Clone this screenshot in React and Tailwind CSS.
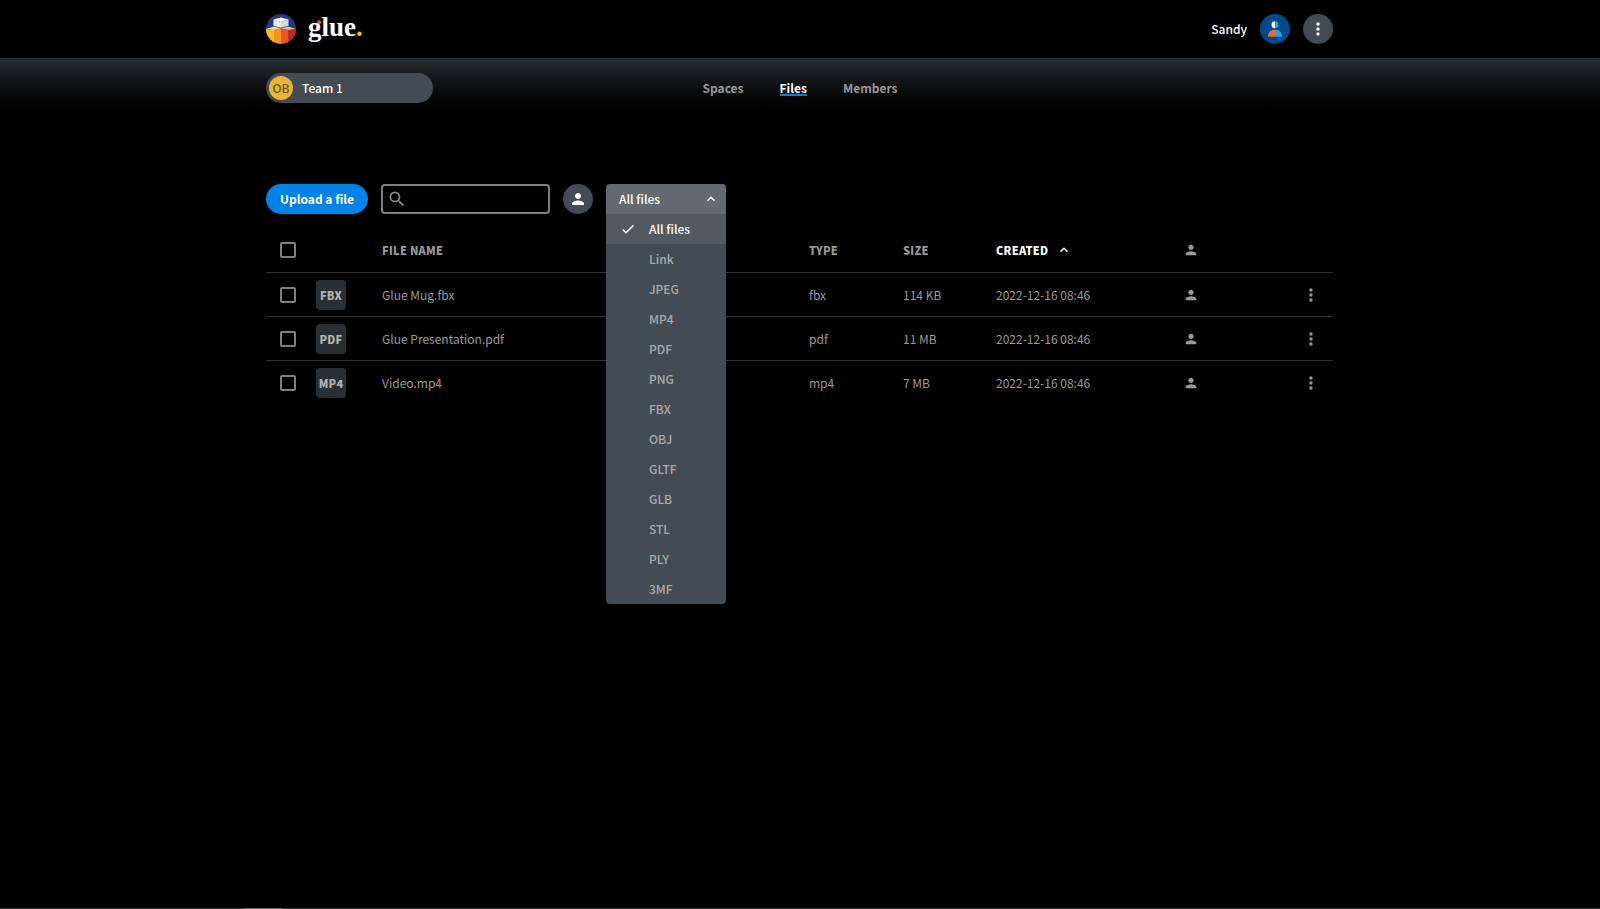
import { useState } from 'react';
import { MdCheck, MdExpandLess, MdMoreVert, MdPerson, MdSearch } from 'react-icons/md';

const fileTypes = [
  'All files',
  'Link',
  'JPEG',
  'MP4',
  'PDF',
  'PNG',
  'FBX',
  'OBJ',
  'GLTF',
  'GLB',
  'STL',
  'PLY',
  '3MF',
];

const files = [
  { name: 'Glue Mug.fbx', type: 'fbx', size: '114 KB', created: '2022-12-16 08:46' },
  { name: 'Glue Presentation.pdf', type: 'pdf', size: '11 MB', created: '2022-12-16 08:46' },
  { name: 'Video.mp4', type: 'mp4', size: '7 MB', created: '2022-12-16 08:46' },
];

function GlueLogo() {
  return (
    <svg viewBox="0 0 30 30" className="size-[30px]" aria-hidden="true">
      <defs>
        <clipPath id="logo-disc">
          <circle cx="15" cy="15" r="15" />
        </clipPath>
      </defs>
      <g clipPath="url(#logo-disc)">
        <rect width="30" height="30" fill="#22397f" />
        <path d="M0 15 8 12.5 15 14.5 8 16z" fill="#f6d9a8" />
        <path d="M15 14.5 22 12.5 30 15 22.5 16z" fill="#f0b8a0" />
        <path d="M0 15 8 16V30H0z" fill="#fbbf1c" />
        <path d="M8 16 15 14.5V30H8z" fill="#f2951f" />
        <path d="M15 14.5 22.5 16V30H15z" fill="#ea5426" />
        <path d="M22.5 16 30 15V30H22.5z" fill="#c6281f" />
        <path d="M15 3.5 22.5 5.5 15 8 7.5 5.5z" fill="#ffffff" />
        <path d="M7.5 5.5 15 8V13.8L7.5 11.8z" fill="#ececef" />
        <path d="M22.5 5.5 15 8V13.8L22.5 11.8z" fill="#d8dae0" />
      </g>
    </svg>
  );
}

function UserAvatar() {
  return (
    <svg viewBox="0 0 30 30" className="size-[30px]" aria-hidden="true">
      <circle cx="15" cy="15" r="15" fill="#03498a" />
      <path d="M15 7.3a3.5 3.5 0 0 0 0 7z" fill="#ffffff" />
      <path d="M15 7.3a3.5 3.5 0 0 1 0 7z" fill="#2d9cf0" />
      <path d="M15 15.7c-4.5 0-7 2.5-7 7H15z" fill="#f26a2e" />
      <path d="M15 15.7c4.5 0 7 2.5 7 7H15z" fill="#2d9cf0" />
    </svg>
  );
}

function Checkbox({ label, checked, onChange }) {
  return (
    <input
      type="checkbox"
      aria-label={label}
      checked={checked}
      onChange={onChange}
      className="block size-4 appearance-none rounded-xs border-2 border-[#808080] checked:bg-[#0083e8]"
    />
  );
}

function TypeFilter() {
  const [open, setOpen] = useState(true);
  const [selected, setSelected] = useState('All files');

  return (
    <div className="relative w-[120px] font-medium">
      <button
        type="button"
        aria-haspopup="listbox"
        aria-expanded={open}
        onClick={() => setOpen(!open)}
        className="flex h-[30px] w-full items-center justify-between rounded-t bg-[#646970] pr-[7px] pl-[13px] text-white"
      >
        {selected}
        <MdExpandLess className="size-4" />
      </button>
      {open && (
        <ul
          role="listbox"
          aria-label="File type"
          className="absolute top-full left-0 z-10 w-full overflow-hidden rounded-b bg-[#454b52] text-[#a8abae]"
        >
          {fileTypes.map((type) => (
            <li
              key={type}
              role="option"
              aria-selected={type === selected}
              onClick={() => setSelected(type)}
              className="flex h-[30px] cursor-pointer items-center pl-[43px] aria-selected:bg-[#54595f] aria-selected:pl-[14px] aria-selected:text-white"
            >
              {type === selected && <MdCheck className="mr-[13px] size-4" />}
              {type}
            </li>
          ))}
        </ul>
      )}
    </div>
  );
}

export default function App() {
  const [checked, setChecked] = useState([]);
  const [query, setQuery] = useState('');

  const toggle = (name) =>
    setChecked(checked.includes(name) ? checked.filter((n) => n !== name) : [...checked, name]);
  const toggleAll = () =>
    setChecked(checked.length === files.length ? [] : files.map((f) => f.name));

  return (
    <div className="flex min-h-screen flex-col bg-black font-['Noto_Sans_CJK_SC',sans-serif] text-[12px] leading-4 text-[#999999]">
      <header className="mx-auto flex h-[58px] w-full max-w-[1068px] items-center justify-between pr-px">
        <a href="#" className="flex items-center gap-3">
          <GlueLogo />
          <span className="relative mb-1 font-['Liberation_Serif',serif] text-[27px] leading-8 font-bold text-white">
            glue<span className="text-[#fbbf1c]">.</span>
            <span className="absolute top-[9px] left-[9px] size-1 rounded-full bg-[#e8491f]" />
          </span>
        </a>
        <div className="flex items-center gap-[13px] font-medium text-white">
          <span>Sandy</span>
          <button type="button" aria-label="Profile">
            <UserAvatar />
          </button>
          <button
            type="button"
            aria-label="Menu"
            className="flex size-[30px] items-center justify-center rounded-full bg-[#454b52]"
          >
            <MdMoreVert className="size-5" />
          </button>
        </div>
      </header>

      <div className="bg-linear-to-b from-[#2a2f33] to-black pt-[15px] pb-5">
        <div className="mx-auto grid w-full max-w-[1068px] grid-cols-3 items-center">
          <button
            type="button"
            className="flex h-[30px] w-[167px] items-center gap-[9px] rounded-full bg-[#454b52] pl-[3px] font-medium text-white"
          >
            <span className="flex size-6 items-center justify-center rounded-full bg-[#e8b634] text-[#6b5314]">
              OB
            </span>
            Team 1
          </button>
          <nav className="flex justify-center gap-9 font-bold">
            <a href="#">Spaces</a>
            <a href="#" aria-current="page" className="text-white shadow-[inset_0_-2px_#0083e8]">
              Files
            </a>
            <a href="#">Members</a>
          </nav>
        </div>
      </div>

      <main className="mx-auto w-full max-w-[1068px] grow pt-[61px] pr-px">
        <div className="flex items-center gap-[13px]">
          <button
            type="button"
            className="h-[30px] w-[102px] rounded-full bg-[#0083e8] font-bold text-white"
          >
            Upload a file
          </button>
          <label className="flex h-[30px] w-[169px] items-center rounded border-2 border-[#808080] px-1">
            <MdSearch className="size-5 shrink-0 text-[#8c8c8c]" />
            <input
              type="search"
              aria-label="Search files"
              value={query}
              onChange={(e) => setQuery(e.target.value)}
              className="w-full min-w-0 bg-transparent px-1 text-white outline-none"
            />
          </label>
          <button
            type="button"
            aria-label="Filter by owner"
            className="flex size-[30px] items-center justify-center rounded-full bg-[#454b52] text-white"
          >
            <MdPerson className="size-[18px]" />
          </button>
          <TypeFilter />
        </div>

        <table className="mt-[14px] w-full table-fixed border-separate border-spacing-0 text-left">
          <thead>
            <tr className="h-[45px] text-[11px] *:border-b *:border-[#333333] *:p-0 *:font-black *:tracking-wide">
              <th className="w-[50px]">
                <div className="pl-[14px]">
                  <Checkbox
                    label="Select all files"
                    checked={checked.length === files.length}
                    onChange={toggleAll}
                  />
                </div>
              </th>
              <th className="w-[66px]" aria-label="Format" />
              <th>FILE NAME</th>
              <th className="w-[94px]">TYPE</th>
              <th className="w-[93px]">SIZE</th>
              <th className="w-[187px] text-white" aria-sort="ascending">
                <button type="button" className="flex items-center gap-2 tracking-wide">
                  CREATED
                  <MdExpandLess className="size-4" />
                </button>
              </th>
              <th className="w-[118px]" aria-label="Owner">
                <MdPerson className="size-4" />
              </th>
              <th className="w-8" aria-label="Actions" />
            </tr>
          </thead>
          <tbody>
            {files.map((file) => (
              <tr
                key={file.name}
                className="h-11 *:border-b *:border-[#333333] *:p-0 last:*:border-b-0"
              >
                <td>
                  <div className="pl-[14px]">
                    <Checkbox
                      label={`Select ${file.name}`}
                      checked={checked.includes(file.name)}
                      onChange={() => toggle(file.name)}
                    />
                  </div>
                </td>
                <td>
                  <div className="flex size-[30px] items-center justify-center rounded bg-[#2a2f33] text-[11px] font-black tracking-wide text-[#b3b3b3] uppercase">
                    {file.type}
                  </div>
                </td>
                <td>{file.name}</td>
                <td>{file.type}</td>
                <td>{file.size}</td>
                <td>{file.created}</td>
                <td>
                  <MdPerson className="size-4" />
                </td>
                <td>
                  <button type="button" aria-label={`Actions for ${file.name}`} className="block">
                    <MdMoreVert className="size-5" />
                  </button>
                </td>
              </tr>
            ))}
          </tbody>
        </table>
      </main>
      <footer className="h-px bg-[#2a2f33] pl-[244px]">
        <div className="h-px w-[38px] bg-[#6b6b70]" />
      </footer>
    </div>
  );
}
